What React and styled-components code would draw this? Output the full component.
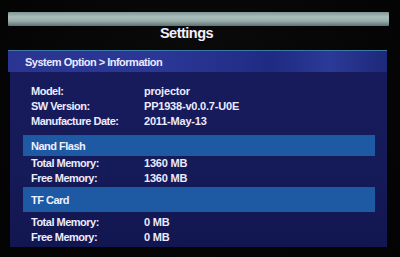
import React from "react";
import styled, { createGlobalStyle } from "styled-components";

const Global = createGlobalStyle`
  html, body { margin: 0; padding: 0; background: #070605; }
  body { font-family: "Liberation Sans", Arial, sans-serif; }
`;

const Screen = styled.div`
  width: 400px;
  height: 257px;
  box-sizing: border-box;
  padding: 12px 11px 0 8px;
  background: radial-gradient(ellipse at 50% 40%, #0d0c0c 0%, #060505 70%, #030303 100%);
  overflow: hidden;
`;

const TopBar = styled.div`
  height: 14px;
  border-radius: 1px;
  background: linear-gradient(180deg, #7f9795 0%, #aabdbb 35%, #98acaa 65%, #5f7174 100%);
`;

const Title = styled.div`
  height: 24px;
  box-sizing: border-box;
  padding: 0 24px 0 0;
  line-height: 15px;
  text-align: center;
  color: #f2f0ff;
  font-size: 14.5px;
  font-weight: 700;
  letter-spacing: -0.5px;
`;

const HeaderBand = styled.div`
  height: 22px;
  margin-right: 2px;
  box-sizing: border-box;
  padding-left: 17px;
  display: flex;
  align-items: center;
  border-top: 1px solid #3f7aa6;
  background: linear-gradient(90deg, #2a3591 0%, #2b3796 40%, #1f2b82 70%, #2b3a98 85%, #1d2878 100%);
  color: #eceaff;
  font-size: 11px;
  font-weight: 700;
  letter-spacing: -0.5px;
`;

const Panel = styled.div`
  margin-left: 2px;
  margin-right: 2px;
  padding: 12px 0 2px 0;
  background: linear-gradient(180deg, #171b5c 0%, #151a58 60%, #121650 100%);
  display: flex;
  flex-direction: column;
`;

const Row = styled.div`
  display: flex;
  height: 15px;
  line-height: 15px;
  padding-left: 21px;
  color: #ecebff;
  font-size: 11px;
  font-weight: 700;
`;

const Label = styled.span`
  width: 113px;
  letter-spacing: -0.5px;
  flex: none;
`;

const Value = styled.span`
  letter-spacing: -0.2px;
`;

const SectionBand = styled.div`
  height: ${(p) => p.$h}px;
  margin: ${(p) => p.$top}px 12px ${(p) => p.$bottom}px 13px;
  box-sizing: border-box;
  padding-left: 8px;
  display: flex;
  align-items: center;
  background: #1e59a4;
  color: #eef0ff;
  font-size: 11px;
  font-weight: 700;
  letter-spacing: -0.5px;
`;

const info = [
  ["Model:", "projector"],
  ["SW Version:", "PP1938-v0.0.7-U0E"],
  ["Manufacture Date:", "2011-May-13"],
];

const sections = [
  { name: "Nand Flash", top: 6, bottom: 0, h: 21, total: "1360 MB", free: "1360 MB" },
  { name: "TF Card", top: 1, bottom: 3, h: 25, total: "0 MB", free: "0 MB" },
];

export default function App() {
  return (
    <Screen>
      <Global />
      <TopBar />
      <Title>Settings</Title>
      <HeaderBand>System Option &gt; Information</HeaderBand>
      <Panel>
        {info.map(([l, v]) => (
          <Row key={l}>
            <Label>{l}</Label>
            <Value>{v}</Value>
          </Row>
        ))}
        {sections.map((s) => (
          <React.Fragment key={s.name}>
            <SectionBand $top={s.top} $bottom={s.bottom} $h={s.h}>
              {s.name}
            </SectionBand>
            <Row>
              <Label>Total Memory:</Label>
              <Value>{s.total}</Value>
            </Row>
            <Row>
              <Label>Free Memory:</Label>
              <Value>{s.free}</Value>
            </Row>
          </React.Fragment>
        ))}
      </Panel>
    </Screen>
  );
}
